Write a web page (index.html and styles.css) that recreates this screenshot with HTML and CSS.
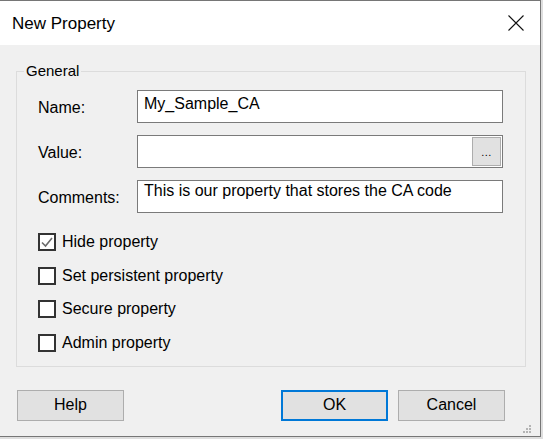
FILE: index.html
```html
<!DOCTYPE html>
<html lang="en">
<head>
<meta charset="utf-8">
<title>New Property</title>
<link rel="stylesheet" href="styles.css">
</head>
<body>
<div class="window">
  <div class="titlebar">
    <span class="title">New Property</span>
    <svg class="close" width="16" height="16" viewBox="0 0 16 16"><path d="M0.5 0.5 L15.5 15.5 M15.5 0.5 L0.5 15.5" stroke="#111" stroke-width="1.1" fill="none"/></svg>
  </div>
  <div class="content">
    <fieldset class="group">
      <legend>General</legend>
      <div class="group-inner">
        <div class="form">
          <label class="lbl">Name:</label>
          <div class="field"><span class="field-text">My_Sample_CA</span></div>
          <label class="lbl">Value:</label>
          <div class="field field-value"><span class="field-text"></span><span class="browse">...</span></div>
          <label class="lbl">Comments:</label>
          <div class="field field-multi"><span class="field-text">This is our property that stores the CA code</span></div>
        </div>
        <div class="checks">
          <div class="check"><span class="box"><svg width="14" height="14" viewBox="0 0 14 14"><path d="M2 7.5 L5.5 11 L12 3" stroke="#6b6b6b" stroke-width="1.6" fill="none"/></svg></span><span>Hide property</span></div>
          <div class="check"><span class="box"></span><span>Set persistent property</span></div>
          <div class="check"><span class="box"></span><span>Secure property</span></div>
          <div class="check"><span class="box"></span><span>Admin property</span></div>
        </div>
      </div>
    </fieldset>
    <div class="buttons">
      <button class="btn">Help</button>
      <div class="spacer"></div>
      <button class="btn btn-default">OK</button>
      <button class="btn">Cancel</button>
    </div>
  </div>
  <svg class="grip" width="9" height="9" viewBox="0 0 9 9">
    <rect x="6" y="0" width="2" height="2" fill="#b4b4b4"/>
    <rect x="3" y="3" width="2" height="2" fill="#b4b4b4"/>
    <rect x="6" y="3" width="2" height="2" fill="#b4b4b4"/>
    <rect x="0" y="6" width="2" height="2" fill="#b4b4b4"/>
    <rect x="3" y="6" width="2" height="2" fill="#b4b4b4"/>
    <rect x="6" y="6" width="2" height="2" fill="#b4b4b4"/>
  </svg>
</div>
</body>
</html>
```
FILE: styles.css
```css
html, body {
  margin: 0;
  padding: 0;
  background: #dedede;
}
body {
  font-family: "Liberation Sans", Arial, sans-serif;
  font-size: 16px;
  line-height: 18px;
  color: #000;
}
.window {
  position: relative;
  width: 540px;
  height: 435px;
  border-top: 1px solid #767676;
  border-right: 1px solid #767676;
  border-bottom: 1px solid #767676;
  background: #f0f0f0;
  display: flex;
  flex-direction: column;
}
.titlebar {
  height: 44px;
  background: #fff;
  display: flex;
  align-items: center;
  justify-content: space-between;
  padding: 0 16px 0 12px;
}
.title {
  font-size: 17px;
  line-height: 20px;
  padding-top: 2px;
}
.close {
  display: block;
}
.content {
  flex: 1;
  display: flex;
  flex-direction: column;
}
.group {
  margin: 17px 14px 0 16px;
  padding: 0;
  border: 1px solid #dcdcdc;
  min-width: 0;
}
.group legend {
  margin-left: 7px;
  padding: 0 2px;
  font-size: 15px;
  line-height: 18px;
}
.group-inner {
  padding: 10px 22px 14px 21px;
}
.form {
  display: grid;
  grid-template-columns: 99px 1fr;
  grid-auto-rows: 33px;
  row-gap: 12px;
}
.lbl {
  padding-top: 9px;
}
.field {
  border: 1px solid #7a7a7a;
  background: #fff;
  padding: 4px 6px 0;
  display: flex;
  align-items: flex-start;
}
.field-multi {
  padding-top: 1px;
}
.field-value {
  padding: 1px 1px 1px 6px;
}
.field-value .field-text {
  flex: 1;
}
.browse {
  width: 29px;
  height: 29px;
  background: #e1e1e1;
  border: 1px solid #adadad;
  font-size: 11px;
  line-height: 11px;
  display: flex;
  align-items: flex-end;
  justify-content: center;
  padding-bottom: 7px;
  box-sizing: border-box;
  letter-spacing: 0.5px;
}
.checks {
  margin-top: 20px;
  display: flex;
  flex-direction: column;
  gap: 15.5px;
}
.check {
  display: flex;
  align-items: center;
  gap: 6px;
  height: 18px;
}
.box {
  width: 18px;
  height: 18px;
  box-sizing: border-box;
  border: 2px solid #333;
  background: #fff;
  display: flex;
  align-items: center;
  justify-content: center;
}
.box svg {
  display: block;
}
.buttons {
  display: flex;
  gap: 10px;
  margin-top: 23px;
  padding: 0 35px 0 17px;
}
.spacer {
  flex: 1;
}
.btn {
  width: 107px;
  height: 31px;
  font-family: "Liberation Sans", Arial, sans-serif;
  font-size: 16px;
  color: #000;
  background: #e1e1e1;
  border: 1px solid #adadad;
  padding: 0;
  margin: 0;
}
.btn-default {
  border: 2px solid #0078d7;
}
.grip {
  position: absolute;
  right: 8px;
  bottom: 2px;
}
```
